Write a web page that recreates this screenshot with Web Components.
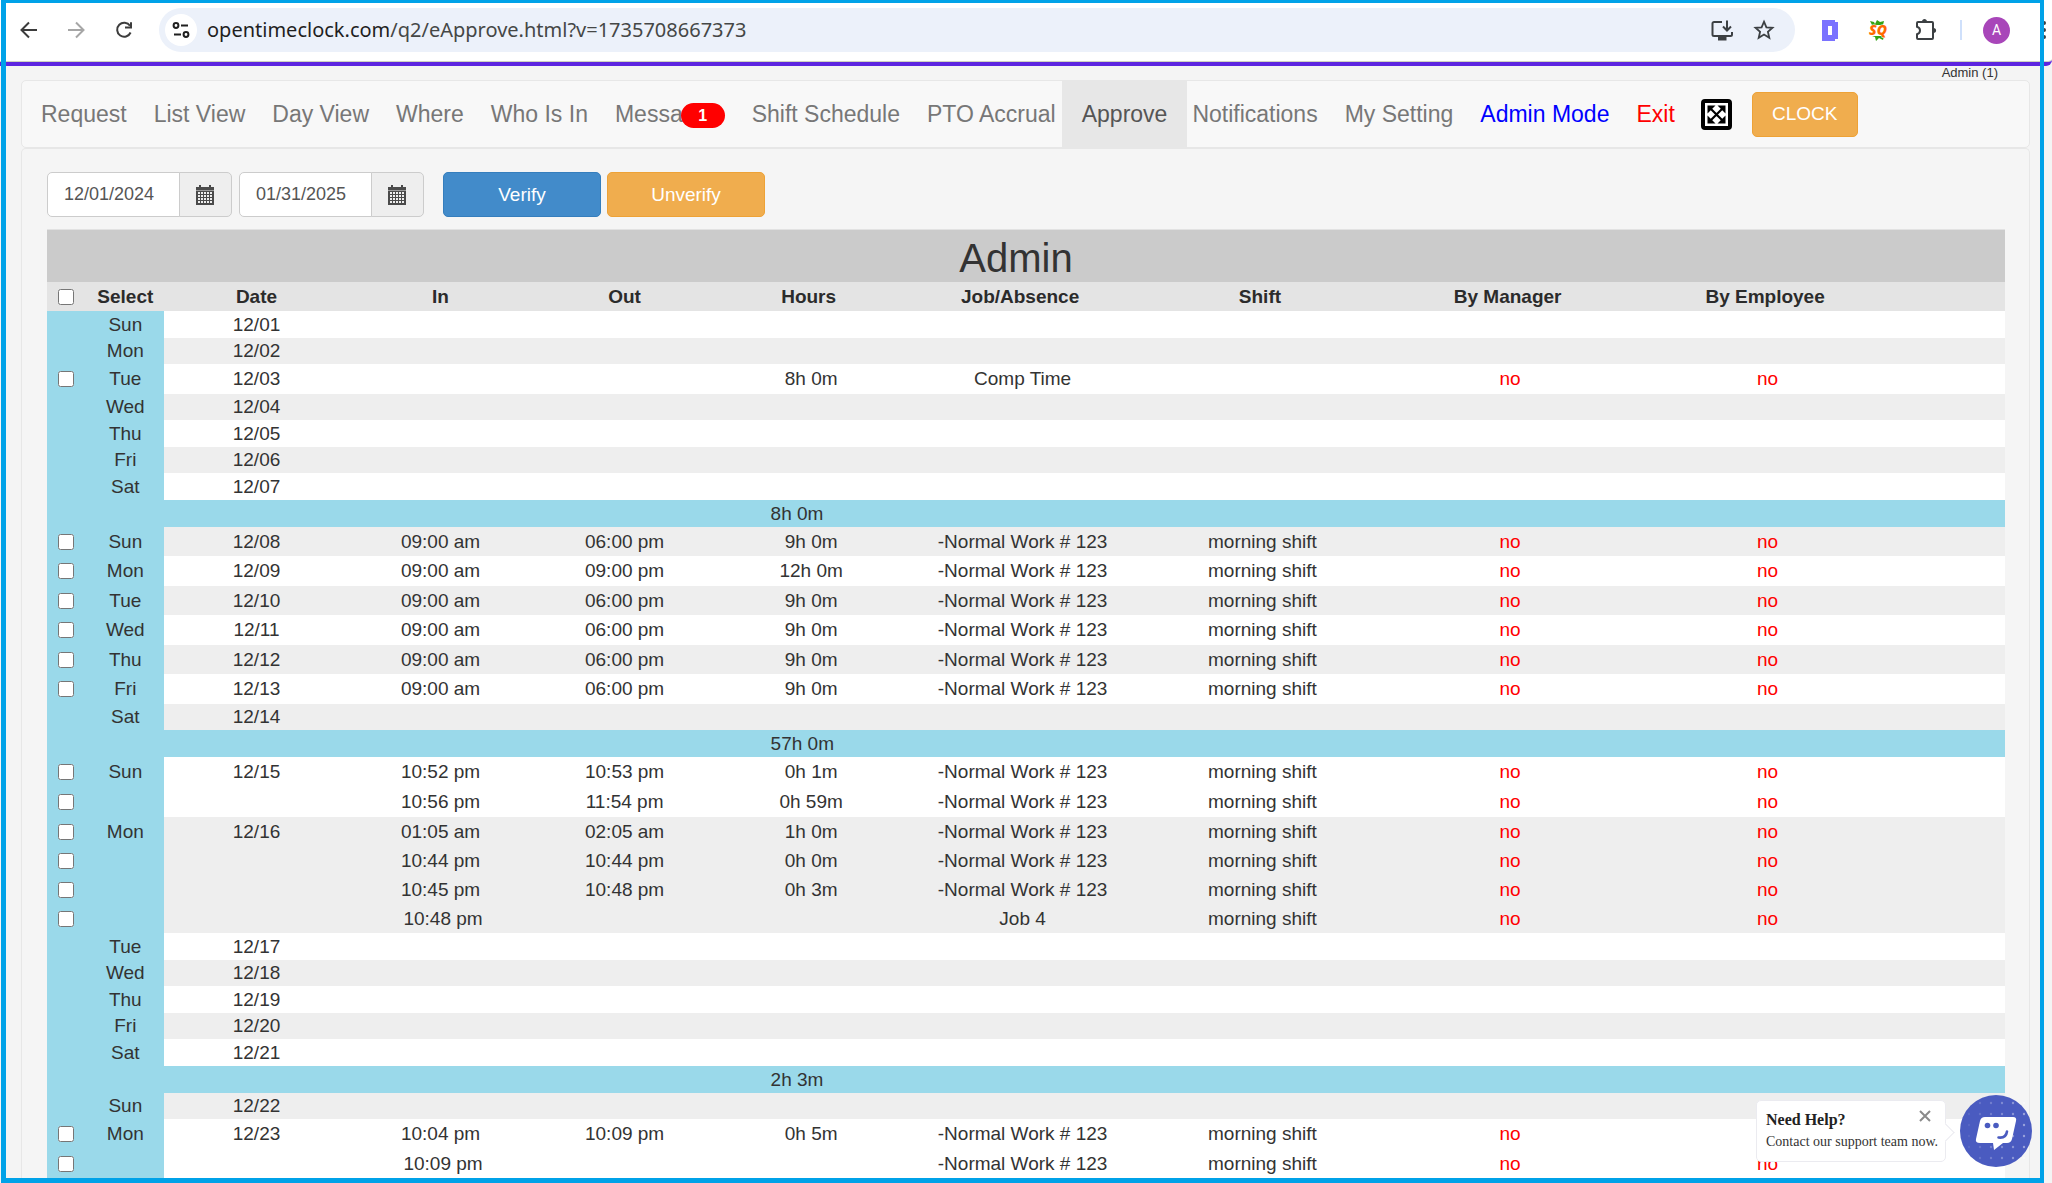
<!DOCTYPE html>
<html lang="en">
<head>
<meta charset="utf-8">
<title>Approve - Open Time Clock</title>
<style>
  html, body { margin: 0; height: 100%; overflow: hidden; }
  body { font-family: "Liberation Sans", Arial, sans-serif; font-size: 19px; color: #333; background: #f4f4f4; }
</style>
</head>
<body>
<browser-window>
  <browser-toolbar slot="toolbar" host="opentimeclock.com" path="/q2/eApprove.html?v=1735708667373"></browser-toolbar>
  <status-line>Admin (1)</status-line>
  <nav-bar>
    <nav-item>Request</nav-item>
    <nav-item>List View</nav-item>
    <nav-item>Day View</nav-item>
    <nav-item>Where</nav-item>
    <nav-item>Who Is In</nav-item>
    <nav-item badge="1">Messa</nav-item>
    <nav-item>Shift Schedule</nav-item>
    <nav-item>PTO Accrual</nav-item>
    <nav-item active>Approve</nav-item>
    <nav-item>Notifications</nav-item>
    <nav-item>My Setting</nav-item>
    <nav-item style="--link: #0000ff">Admin Mode</nav-item>
    <nav-item style="--link: #ff0000">Exit</nav-item>
    <full-screen-button slot="tools"></full-screen-button>
    <color-button slot="tools" kind="warning" style="--width: 106px">CLOCK</color-button>
  </nav-bar>
  <content-panel>
    <filter-bar slot="filters">
      <date-field label="From" value="12/01/2024"></date-field>
      <date-field label="To" value="01/31/2025"></date-field>
      <color-button slot="actions" kind="primary">Verify</color-button>
      <color-button slot="actions" kind="warning">Unverify</color-button>
    </filter-bar>
    <time-table caption="Admin"></time-table>
  </content-panel>
</browser-window>
<help-chat heading="Need Help?">Contact our support team now.</help-chat>
<window-frame></window-frame>

<script>
class Base extends HTMLElement {
  connectedCallback() {
    if (this.shadowRoot) return;
    this.attachShadow({ mode: "open" }).innerHTML =
      "<style>*{box-sizing:border-box}button{font:inherit;cursor:pointer}</style>" + this.render();
  }
  at(name) { return this.getAttribute(name) || ""; }
}

customElements.define("browser-window", class extends Base {
  render() { return `<style>
    :host { display: flex; flex-direction: column; height: 100vh; overflow: hidden; }
    main { flex: 1; min-height: 0; padding: 0 22px 0 21px; display: flex; flex-direction: column; }
  </style><slot name="toolbar"></slot><main><slot></slot></main>`; }
});

/* Coloured outline around the whole window */
customElements.define("window-frame", class extends Base {
  render() { return `<style>
    :host { display: block; position: fixed; inset: 0 8px 0 1px; border: solid #00a2e8; border-width: 3px 4px 5px 5px; box-sizing: border-box; pointer-events: none; }
  </style>`; }
});

customElements.define("browser-toolbar", class extends Base {
  render() { return `<style>
    :host { display: flex; align-items: center; flex: none; height: 66px; padding: 0 0 2px 5px; background: #fff;
      border-bottom: 4px solid #5d25e0; border-bottom-right-radius: 6px; box-shadow: inset 0 -1px #cfd3c0; box-sizing: border-box; }
    button { flex: none; width: 48px; height: 44px; padding: 0; border: 0; background: none; display: grid; place-items: center; }
    svg { display: block; }
    .bar { flex: 1; height: 44px; margin: 0 11px 0 10px; padding: 0 10px 0 6px; border-radius: 22px; background: #ecf1fa; display: flex; align-items: center; }
    .bar button { width: 32px; height: 32px; border-radius: 50%; margin-right: 10px; background: #fff; }
    .url { flex: 1; font-family: "Noto Sans", sans-serif; font-size: 20px; line-height: 28px; color: #454746; }
    .url b { font-weight: 400; color: #1f1f1f; }
    .bar button.act { width: 42px; margin: 0; background: none; }
    hr { flex: none; width: 2px; height: 20px; margin: 0 21px 0 10px; border: 0; background: #cfe0fb; }
    button.me { width: 27px; height: 27px; border-radius: 50%; background: #a846b9; color: #fff; font: 14px/27px Roboto, sans-serif; }
    button.menu { width: 42px; }
  </style>
  <button aria-label="Back"><svg width="20" height="20" fill="none" stroke="#3c3c3c" stroke-width="2"><path d="M18 10H3M10 2.5 2.5 10l7.500 7.500"/></svg></button>
  <button aria-label="Forward"><svg width="20" height="20" fill="none" stroke="#a6a6a6" stroke-width="2"><path d="M1 10h15M9 2.500 16.500 10 9 17.500"/></svg></button>
  <button aria-label="Reload"><svg width="20" height="20" fill="none" stroke="#3c3c3c" stroke-width="2"><path d="M15.600 12.500A7 7 0 1 1 15 5.800M16 2.300v5.200h-6"/></svg></button>
  <div class="bar">
    <button aria-label="Site information"><svg width="18" height="18" fill="none" stroke="#1f1f1f" stroke-width="2"><circle cx="4" cy="4.500" r="2.400"/><path d="M9 4.500h7M2 13.500h7"/><circle cx="14" cy="13.500" r="2.400"/></svg></button>
    <div class="url"><b>${this.at("host")}</b>${this.at("path")}</div>
    <button class="act" aria-label="Install"><svg width="24" height="22" fill="none" stroke="#3c4043" stroke-width="2"><path d="M12 3H4a1.500 1.500 0 0 0-1.500 1.500v11A1.500 1.500 0 0 0 4 17h16.500a1.500 1.500 0 0 0 1.500-1.500V13M17 1.500v9M13 7.500l4 4 4-4"/><path d="M9 18v2.500h6.500V18z" fill="#3c4043"/></svg></button>
    <button class="act" aria-label="Bookmark"><svg width="22" height="22" fill="none" stroke="#3c4043" stroke-width="1.800"><path d="m11 2.700 2.400 5.600 6.100.500-4.600 4 1.400 6-5.300-3.200-5.300 3.200 1.400-6-4.600-4 6.100-.500z"/></svg></button>
  </div>
  <button aria-label="Dashboard extension"><svg width="17" height="21"><path d="M0 0h13v2h3v17h-3v2H0z" fill="#7a72ff"/><rect x="6" y="6" width="4" height="9" fill="#fff"/></svg></button>
  <button aria-label="SEO extension"><svg width="22" height="22"><path d="m3 2 4 1 1 2 2-4 3 2 4-1-1 4H5zM5 17l3 1 1 4 3-3 4 2 1-4z" fill="#35a314"/><text x="11" y="16" text-anchor="middle" font-family="Open Sans, sans-serif" font-size="14" font-weight="800" font-style="italic" fill="#ff6a00" stroke="#fff" stroke-width="1" paint-order="stroke">SQ</text></svg></button>
  <button aria-label="Extensions"><svg width="24" height="24" fill="none" stroke="#3c4043" stroke-width="2"><path d="M4 4h14a1 1 0 0 1 1 1v15a1 1 0 0 1-1 1H4a1 1 0 0 1-1-1v-3.700c4-1 4-6.600 0-7.600V5a1 1 0 0 1 1-1z"/><path d="M8 3.500c0-3.500 5-3.500 5 0zM19.500 10c3.500 0 3.500 5 0 5z" fill="#3c4043" stroke="none"/></svg></button>
  <hr>
  <button class="me" aria-label="Profile">A</button>
  <button class="menu" aria-label="Menu"><svg width="42" height="20" fill="#3c4043"><circle cx="34" cy="3" r="2"/><circle cx="34" cy="10" r="2"/><circle cx="34" cy="17" r="2"/></svg></button>`; }
});

customElements.define("status-line", class extends Base {
  render() { return `<style>
    :host { display: block; flex: none; height: 14px; padding-right: 32px; font-size: 13px; line-height: 14px; text-align: right; }
  </style><slot></slot>`; }
});

customElements.define("nav-bar", class extends Base {
  render() { return `<style>
    :host { display: flex; align-items: center; flex: none; height: 68px; padding-left: 6px; background: #f8f8f8; border: 1px solid #e7e7e7; border-radius: 5px; box-sizing: border-box; }
    nav { display: flex; height: 100%; }
    .tools { display: flex; align-items: center; gap: 20px; margin-left: 12px; }
  </style><nav><slot></slot></nav><div class="tools"><slot name="tools"></slot></div>`; }
});

customElements.define("nav-item", class extends Base {
  render() { return `<style>
    :host { display: block; flex: none; font-size: 23px; line-height: 66px; white-space: nowrap; }
    a { display: flex; align-items: center; height: 66px; padding: 0 14px 0 13px; color: var(--link, #777); text-decoration: none; }
    :host([active]) { margin: 0 -8px; }
    :host([active]) a { padding: 0 20px; background: #e7e7e7; color: #555; }
    .badge { width: 44px; height: 25px; margin-left: -2px; margin-top: 3px; border-radius: 13px; background: #f00; color: #fff; font-size: 16px; font-weight: 700; line-height: 25px; text-align: center; }
  </style><a href="#"><slot></slot>${this.at("badge") ? `<span class="badge">${this.at("badge")}</span>` : ""}</a>`; }
});

customElements.define("full-screen-button", class extends Base {
  render() { return `<style>
    :host { display: block; }
    button { display: block; padding: 0; border: 0; background: none; }
    svg { display: block; }
  </style><button aria-label="Full screen"><svg width="31" height="31"><rect x="2" y="2" width="27" height="27" rx="2" fill="#fff" stroke="#000" stroke-width="4"/>
    <path d="M6.500 6.500h8l-8 8zM24.500 6.500v8l-8-8zM24.500 24.500h-8l8-8zM6.500 24.500v-8l8 8z"/>
    <path d="m9 9 13 13M22 9 9 22" stroke="#000" stroke-width="2.200"/></svg></button>`; }
});

customElements.define("color-button", class extends Base {
  render() { return `<style>
    :host { display: block; width: var(--width, 158px); }
    button { width: 100%; height: 45px; padding: 0; border: 1px solid #357ebd; border-radius: 5px; background: #428bca; color: #fff; font-size: 19px; }
    :host([kind=warning]) button { background: #f0ad4e; border-color: #eea236; }
  </style><button><slot></slot></button>`; }
});

customElements.define("content-panel", class extends Base {
  render() { return `<style>
    :host { display: flex; flex-direction: column; gap: 12px; flex: 1; padding: 23px 24px 0 25px; background: #f5f5f5; border: 1px solid #e7e7e7; border-bottom: 0; border-radius: 5px 5px 0 0; box-sizing: border-box; }
  </style><slot name="filters"></slot><slot></slot>`; }
});

customElements.define("filter-bar", class extends Base {
  render() { return `<style>
    :host { display: flex; gap: 19px; flex: none; }
    .dates { display: flex; gap: 7px; }
    .actions { display: flex; gap: 6px; }
  </style><div class="dates"><slot></slot></div><div class="actions"><slot name="actions"></slot></div>`; }
});

customElements.define("date-field", class extends Base {
  render() {
    let cells = "";
    for (let r = 0; r < 4; r++) for (let c = 0; c < 5; c++) cells += `<rect x="${2 + c * 3}" y="${7 + r * 3}" width="2" height="2"/>`;
    return `<style>
    :host { display: flex; height: 45px; }
    input { width: 133px; height: 100%; padding: 0 0 0 16px; border: 1px solid #ccc; border-radius: 5px 0 0 5px; background: #fff; font: inherit; font-size: 18px; color: #555; }
    button { width: 53px; height: 100%; margin-left: -1px; padding: 0 2px 0 0; border: 1px solid #ccc; border-radius: 0 5px 5px 0; background: #eee; display: grid; place-items: center; }
  </style><input type="text" aria-label="${this.at("label")}" value="${this.at("value")}">
  <button aria-label="Choose date"><svg width="18" height="20"><path d="M0 2h18v3.500H0zM0 6h18v14H0zM3 0h2v3H3zM13 0h2v3h-2z" fill="#4a4a4a"/><g fill="#eee">${cells}</g></svg></button>`; }
});

/* Each day: [weekday, date, entries]; an entry is [in, out, hours, job, shift, by manager, by employee]. A string is a week total. */
const N = "-Normal Work # 123", M = "morning shift";
const day9 = [["09:00 am", "06:00 pm", "9h 0m", N, M]];
const days = [
  ["Sun", "12/01"], ["Mon", "12/02"], ["Tue", "12/03", [["", "", "8h 0m", "Comp Time", ""]]],
  ["Wed", "12/04"], ["Thu", "12/05"], ["Fri", "12/06"], ["Sat", "12/07"], "8h 0m",
  ["Sun", "12/08", day9], ["Mon", "12/09", [["09:00 am", "09:00 pm", "12h 0m", N, M]]],
  ["Tue", "12/10", day9], ["Wed", "12/11", day9], ["Thu", "12/12", day9], ["Fri", "12/13", day9], ["Sat", "12/14"], "57h 0m",
  ["Sun", "12/15", [["10:52 pm", "10:53 pm", "0h 1m", N, M], ["10:56 pm", "11:54 pm", "0h 59m", N, M]]],
  ["Mon", "12/16", [["01:05 am", "02:05 am", "1h 0m", N, M], ["10:44 pm", "10:44 pm", "0h 0m", N, M], ["10:45 pm", "10:48 pm", "0h 3m", N, M], ["10:48 pm", "", "", "Job 4", M]]],
  ["Tue", "12/17"], ["Wed", "12/18"], ["Thu", "12/19"], ["Fri", "12/20"], ["Sat", "12/21"], "2h 3m",
  ["Sun", "12/22"], ["Mon", "12/23", [["10:04 pm", "10:09 pm", "0h 5m", N, M, "no", ""], ["10:09 pm", "", "", N, M]]]
];

customElements.define("time-table", class extends Base {
  render() {
    let n = 0, rows = "";
    for (const d of days) {
      if (typeof d === "string") {
        rows += `<tr class="total"><td colspan="5"></td><td>${d}</td><td colspan="5"></td></tr>`;
        continue;
      }
      const [name, date, entries] = d, stripe = n++ % 2 ? "odd" : "even";
      if (!entries) {
        rows += `<tr class="${stripe}"><td class="k"></td><td class="k">${name}</td><td>${date}</td><td colspan="8"></td></tr>`;
        continue;
      }
      entries.forEach(([i, o, h, j, s, mgr = "no", emp = "no"], k) => {
        rows += `<tr class="${stripe} entry"><td class="k box"><input type="checkbox" aria-label="Select ${date} entry ${k + 1}"></td>
          <td class="k">${k ? "" : name}</td><td>${k ? "" : date}</td><td class="${o ? "" : "p"}">${i}</td><td>${o}</td>
          <td class="p">${h}</td><td class="p">${j}</td><td class="p">${s}</td><td class="p no">${mgr}</td><td class="p no">${emp}</td><td></td></tr>`;
      });
    }
    const w = [2, 4, 9.4, 9.4, 9.4, 9.4, 12.2, 12.3, 13, 13.3].map(x => `<col style="width:${x}%">`).join("");
    const head = ["Select", "Date", "In", "Out", "Hours", "Job/Absence", "Shift", "By Manager", "By Employee", ""].map(t => `<th>${t}</th>`).join("");
    return `<style>
    :host { display: block; border-top: 1px solid #e2e2e2; }
    table { width: 100%; table-layout: fixed; border-collapse: collapse; line-height: 26px; text-align: center; }
    td, th { padding: 0; height: 26px; white-space: nowrap; vertical-align: middle; }
    .title th { height: 52px; padding: 4px 20px 0 0; background: #cbcbcb; font-size: 40px; font-weight: 400; line-height: 48px; }
    .head th { height: 29px; background: #e4e4e4; color: #2b2b2b; }
    .even td { background: #fff; height: 27px; }
    .odd td { background: #eee; }
    .even.entry td { height: 30px; }
    .odd.entry td { height: 29px; }
    tr td.k, .total td { background: #9ad9ea; }
    .total td { height: 27px; padding-left: 54px; text-align: left; }
    .p { padding-left: 5px; }
    .no { color: #f00; }
    .box { padding-right: 2px; }
    input { display: block; width: 16px; height: 16px; margin: 0 auto; }
  </style>
  <table><colgroup>${w}<col></colgroup>
    <thead><tr class="title"><th colspan="11">${this.at("caption")}</th></tr>
    <tr class="head"><th class="box"><input type="checkbox" aria-label="Select all"></th>${head}</tr></thead>
    <tbody>${rows}</tbody></table>`;
  }
});

customElements.define("help-chat", class extends Base {
  render() {
    let dots = "";
    for (let r = 0; r < 6; r++) for (let c = 0; c < 6; c++) dots += `<circle cx="${9 + c * 11}" cy="${8 + r * 11}" r="1.2" opacity="${0.08 + c * 0.07}"/>`;
    return `<style>
    :host { display: flex; align-items: flex-end; gap: 14px; position: fixed; right: 20px; bottom: 16px; font-family: "Liberation Serif", "Times New Roman", serif; }
    .card { position: relative; width: 190px; height: 62px; margin-bottom: 5px; padding: 8px 9px; border: 1px solid #ebebf0; border-radius: 5px; background: #fff; }
    .card::after { content: ""; position: absolute; right: -7px; top: 25px; width: 12px; height: 12px; background: #fff; border: solid #ebebf0; border-width: 1px 1px 0 0; transform: rotate(45deg); }
    h2 { margin: 0; font-size: 16px; line-height: 22px; color: #222; }
    p { margin: 0; font-size: 14px; line-height: 22px; white-space: nowrap; }
    button { padding: 0; border: 0; background: none; display: block; }
    .close { position: absolute; right: 14px; top: 9px; }
    svg { display: block; }
  </style>
  <div class="card"><h2>${this.at("heading")}</h2><p><slot></slot></p>
    <button class="close" aria-label="Close"><svg width="12" height="12" stroke="#8a8a8a" stroke-width="2"><path d="m1 1 10 10M11 1 1 11"/></svg></button></div>
  <button aria-label="Open chat"><svg width="72" height="72"><circle cx="36" cy="36" r="36" fill="#4a5bc0"/><g fill="#fff">${dots}</g>
    <path d="M25 22h28q4 0 3 4l-4 18q-1 4-5 4h-4l-9 7-1-7H20q-5 0-4-4l4-18q1-4 5-4z" fill="#fff"/>
    <circle cx="27.500" cy="30.500" r="2.800" fill="#4a5bc0"/><circle cx="36" cy="30.500" r="2.800" fill="#4a5bc0"/>
    <path d="M38.500 42.500q7.500 1 8.500-6" fill="none" stroke="#4a5bc0" stroke-width="2.600" stroke-linecap="round"/></svg></button>`; }
});
</script>
</body>
</html>
